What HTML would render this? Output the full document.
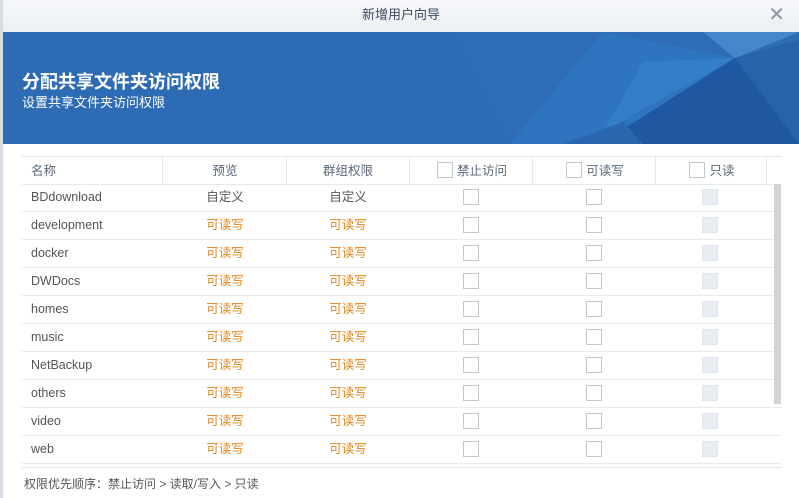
<!DOCTYPE html><html><head><meta charset="utf-8"><style>
body{margin:0;width:799px;height:498px;overflow:hidden;background:#fff;font-family:"Liberation Sans","Noto Sans CJK SC",sans-serif;position:relative}
.l{position:absolute;left:0;top:0;width:3px;height:498px;background:#d8dde3}
.tb{position:absolute;left:3px;top:0;width:796px;height:32px;background:linear-gradient(#f6f8fa,#eceff3);text-align:center;line-height:30px;font-size:13px;color:#3b4a5e}
.x{position:absolute;right:14px;top:0;font-size:20px;color:#8a95a3;line-height:30px}
.hd{position:absolute;left:3px;top:32px;width:796px;height:112px;background:#2d6bb4;overflow:hidden}
.hd h1{position:absolute;left:19px;top:36px;margin:0;font-size:18px;color:#fff;font-weight:bold}
.hd p{position:absolute;left:19px;top:60px;margin:0;font-size:13px;color:#fff}
.t{position:absolute;left:22px;top:156px;width:760px;font-size:12.5px;color:#555}
.r{position:absolute;left:0;width:760px;height:28px;border-bottom:1px solid #e6e9ed}
.c{position:absolute;top:0;height:28px;line-height:28px;text-align:center}
.o{color:#e2861c}
.cb{position:absolute;width:16px;height:16px;border:1px solid #c3c8ce;background:#fff;box-sizing:border-box}
.cb.d{background:#e8edf3;border-color:#e0e5eb}
.hr{border-top:1px solid #e1e4e8;background:#fff}
.hr .c{border-right:1px solid #e6e9ed;color:#5a6878}
.sb{position:absolute;left:774px;top:184px;width:7px;height:220px;background:#d3d3d3}
.f{position:absolute;left:24px;top:475px;font-size:12px;color:#555}
</style></head><body>
<div class="l"></div>
<div class="tb">新增用户向导<span class="x">✕</span></div>
<div class="hd">
<svg width="796" height="112" style="position:absolute;left:0;top:0">
<polygon points="452,0 796,0 796,112 507,112" fill="#2e6db6"/>
<polygon points="600,0 732,26 597,112 507,112" fill="#2f74c0" opacity=".9"/>
<polygon points="640,30 732,26 600,100" fill="#3a86cf" opacity=".5"/>
<polygon points="700,0 796,0 732,26" fill="#4b8fcf" opacity=".8"/>
<polygon points="732,26 796,8 796,112" fill="#2763a8"/>
<polygon points="732,26 796,112 597,112" fill="#1f58a0"/>
<polygon points="560,112 620,90 640,112" fill="#2a67af"/>
</svg>
<h1>分配共享文件夹访问权限</h1><p>设置共享文件夹访问权限</p></div>
<div class="t">
<div class="r hr" style="top:0;height:27px">
<div class="c" style="left:0;width:141px;text-align:left;padding-left:9px;box-sizing:border-box">名称</div>
<div class="c" style="left:142px;width:122px">预览</div>
<div class="c" style="left:265px;width:122px">群组权限</div>
<div class="c" style="left:388px;width:122px"><span class="cb" style="left:27px;top:5px"></span><span style="padding-left:22px">禁止访问</span></div>
<div class="c" style="left:511px;width:122px"><span class="cb" style="left:33px;top:5px"></span><span style="padding-left:22px">可读写</span></div>
<div class="c" style="left:634px;width:110px"><span class="cb" style="left:33px;top:5px"></span><span style="padding-left:22px">只读</span></div>
</div>
</div>
<div class="t" style="top:183px" id="rows"></div>
<div class="sb"></div>
<div style="position:absolute;left:22px;top:467px;width:760px;border-top:1px solid #e1e4e8"></div>
<div class="f">权限优先顺序：禁止访问 &gt; 读取/写入 &gt; 只读</div>
<script>
var n=["BDdownload","development","docker","DWDocs","homes","music","NetBackup","others","video","web"],h="";
n.forEach(function(s,i){var v=i==0?"自定义":"可读写",c=i==0?"":"o";
h+='<div class="r" style="top:'+(i*28)+'px"><div class="c" style="left:9px">'+s+'</div><div class="c '+c+'" style="left:142px;width:122px">'+v+'</div><div class="c '+c+'" style="left:265px;width:122px">'+v+'</div><span class="cb" style="left:441px;top:6px"></span><span class="cb" style="left:564px;top:6px"></span><span class="cb d" style="left:680px;top:6px"></span></div>';});
document.getElementById("rows").innerHTML=h;
</script>
</body></html>
